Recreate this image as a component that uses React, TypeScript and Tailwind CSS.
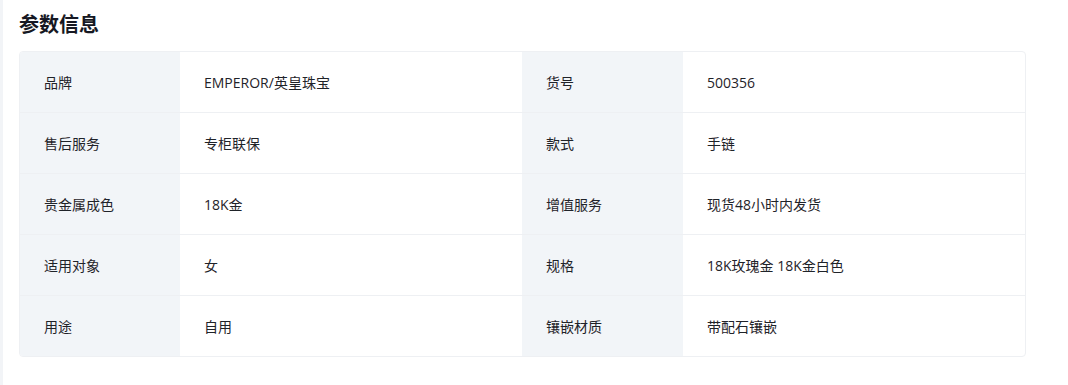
import React from 'react';

const ROWS: [string, string, string, string][] = [
    ['品牌', 'EMPEROR/英皇珠宝', '货号', '500356'],
    ['售后服务', '专柜联保', '款式', '手链'],
    ['贵金属成色', '18K金', '增值服务', '现货48小时内发货'],
    ['适用对象', '女', '规格', '18K玫瑰金 18K金白色'],
    ['用途', '自用', '镶嵌材质', '带配石镶嵌'],
];

export default function App() {
    return (
        <div
            className="flex h-[385px] w-[1068px] bg-white text-[#1f2329]"
            style={{ fontFamily: '"Open Sans", "Noto Sans CJK SC", sans-serif' }}
        >
            <div className="w-[3px] shrink-0 bg-[#f2f4f7]" />
            <div className="pl-4 pt-[9px]">
                <h3
                    className="text-[20px] font-bold leading-[30px] text-[#161823]"
                    style={{ fontFamily: '"Noto Sans CJK SC", sans-serif' }}
                >
                    参数信息
                </h3>
                <div className="mt-[12px] w-[1007px] overflow-hidden rounded-[4px] border border-[#eef0f3]">
                    {ROWS.map((row, i) => (
                        <div
                            key={row[0]}
                            className={`grid grid-cols-[160px_342px_161px_1fr] text-[14px] ${
                                i < ROWS.length - 1 ? 'border-b border-[#eef0f3]' : ''
                            }`}
                        >
                            <div className="flex h-[60px] items-center bg-[#f2f5f8] pl-[24px]">{row[0]}</div>
                            <div className="flex h-[60px] items-center pl-[24px]">{row[1]}</div>
                            <div className="flex h-[60px] items-center bg-[#f2f5f8] pl-[24px]">{row[2]}</div>
                            <div className="flex h-[60px] items-center pl-[24px]">{row[3]}</div>
                        </div>
                    ))}
                </div>
            </div>
        </div>
    );
}
